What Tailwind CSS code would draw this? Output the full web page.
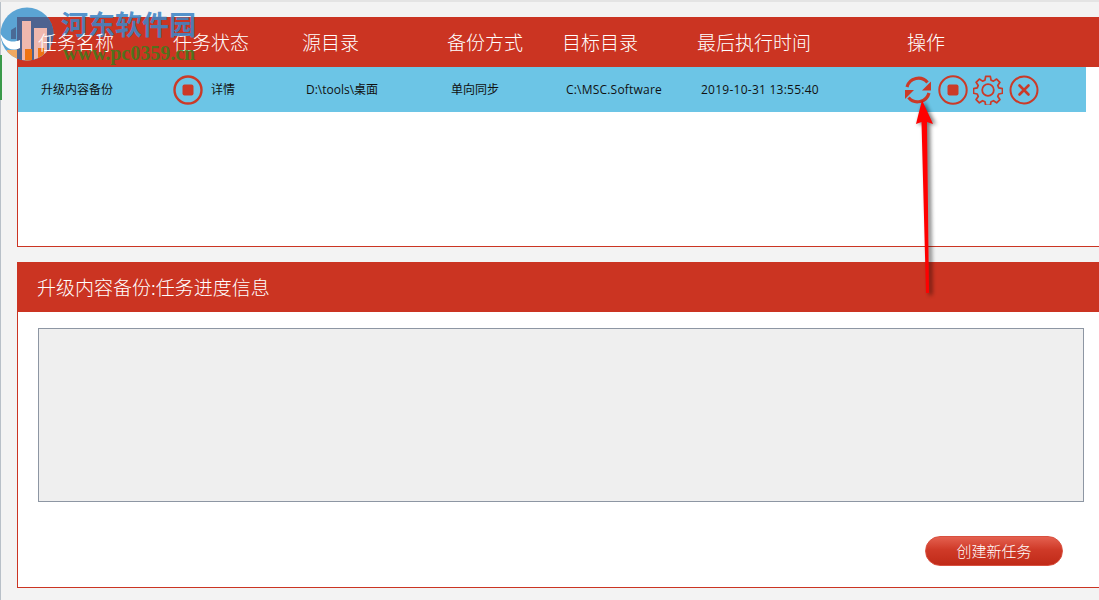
<!DOCTYPE html>
<html lang="zh">
<head>
    <meta charset="UTF-8">
    <title>任务列表</title>
    <script src="https://cdn.jsdelivr.net/npm/@tailwindcss/browser@4"></script>
</head>
<body class="relative w-[1099px] h-[600px] overflow-hidden bg-[#f3f3f3] font-['Noto_Sans_CJK_SC','Noto_Sans',sans-serif] text-black">
    <!-- bordure de fenetre -->
    <div class="h-[2px] bg-[#e4e4e4]"></div>
    <div class="absolute left-0 top-[2px] w-[1px] h-[598px] bg-[#b8c0c8]"></div>
    <div class="absolute left-0 top-[55px] w-[2px] h-[45px] bg-[#3a9a4a]"></div>

    <!-- filigrane du site : logo sous le texte de l'en-tete -->
    <svg class="absolute left-0 top-0 z-10" width="56" height="66" viewBox="0 0 56 66">
        <defs><clipPath id="rond"><circle cx="27" cy="34" r="26.500"/></clipPath></defs>
        <g clip-path="url(#rond)">
            <rect width="56" height="66" fill="#4a9bd0" opacity=".9"/>
            <rect x="17" y="17" width="39" height="49" fill="#4d6390"/>
            <path d="M22 21h9v42h-9zM34 28h13v34H34z" fill="#efb8ae"/>
            <path d="M25 49h7v14h-7zM38 48h6v14h-6z" fill="#ee7414"/>
            <path d="M7 50h10v10H7z" fill="#f0a860"/>
            <path d="M0 33c5 9 13 10 20 7v8C10 53 2 46 0 33z" fill="#fff"/>
            <path d="M11 30l5-3v12h-5z" fill="#4a6a96"/>
        </g>
    </svg>
    <div class="absolute left-[61px] top-[5px] z-10 text-[27px] leading-[38px] font-bold text-[#3f86c6]/90 whitespace-nowrap">河东软件园</div>
    <div class="absolute left-[63px] top-[43px] z-10 text-[20px] leading-[20px] font-bold text-[#3c7d1c]/85 font-['Liberation_Serif',serif] whitespace-nowrap">www.pc0359.cn</div>

    <div class="pl-[17px] pt-[15px]">
        <!-- liste des taches -->
        <section class="h-[230px] bg-white border-b border-l border-[#cb3422]">
            <div class="flex items-center h-[50px] -ml-px pl-[21px] bg-[#cb3422] text-white text-[19px] font-light">
                <div class="w-[135px] relative z-20">任务名称</div>
                <div class="w-[129px]">任务状态</div>
                <div class="w-[145px]">源目录</div>
                <div class="w-[115px]">备份方式</div>
                <div class="w-[135px]">目标目录</div>
                <div class="w-[210px]">最后执行时间</div>
                <div>操作</div>
            </div>
            <div class="flex items-center h-[45px] w-[1068px] pl-[23px] bg-[#6cc5e6] text-[12px] text-[#111] font-['Open_Sans','Noto_Sans_CJK_SC',sans-serif]">
                <div class="w-[132px]">升级内容备份</div>
                <div class="w-[133px] flex items-center gap-[8px]">
                    <svg width="30" height="30" viewBox="0 0 30 30"><circle cx="15" cy="15" r="13.500" fill="none" stroke="#cb3a28" stroke-width="2.400"/><rect x="9.500" y="9.500" width="11" height="11" rx="2" fill="#cb3a28"/></svg>
                    <span>详情</span>
                </div>
                <div class="w-[145px]">D:\tools\桌面</div>
                <div class="w-[115px]">单向同步</div>
                <div class="w-[135px] tracking-[0.2px]">C:\MSC.Software</div>
                <div class="w-[202px] tracking-[0.25px]">2019-10-31 13:55:40</div>
                <div class="flex items-center gap-[5px]">
                    <svg width="30" height="30" viewBox="0 0 30 30" fill="none">
                        <path d="M4 12A11.800 11.800 0 0 1 24.500 7.500" stroke="#cb3a28" stroke-width="3.200"/>
                        <path d="M28 6.500v9h-9z" fill="#cb3a28"/>
                        <path d="M26 18A11.800 11.800 0 0 1 5.500 22.500" stroke="#cb3a28" stroke-width="3.200"/>
                        <path d="M2 24v-9h9z" fill="#cb3a28"/>
                    </svg>
                    <svg width="30" height="30" viewBox="0 0 30 30"><circle cx="15" cy="15" r="13.700" fill="none" stroke="#cb3a28" stroke-width="2"/><rect x="9.500" y="9.500" width="11" height="11" rx="2" fill="#cb3a28"/></svg>
                    <svg width="30" height="30" viewBox="0 0 30 30" fill="none" stroke="#cb3a28" stroke-width="1.800" stroke-linejoin="round">
                        <circle cx="15" cy="15" r="5.800"/>
                        <path d="M12.600 1.500h4.800l.8 3.900 2.500 1 3.300-2.200 3.400 3.400-2.200 3.300 1 2.500 3.900.8v4.800l-3.900.8-1 2.500 2.200 3.300-3.400 3.400-3.300-2.200-2.500 1-.8 3.900h-4.800l-.8-3.900-2.500-1-3.300 2.200-3.400-3.400 2.200-3.300-1-2.500-3.900-.8v-4.800l3.900-.8 1-2.500-2.200-3.300 3.400-3.400 3.300 2.200 2.500-1z" transform="translate(.6 0) scale(.96)"/>
                    </svg>
                    <svg width="30" height="30" viewBox="0 0 30 30" fill="none" stroke="#cb3a28" class="ml-px"><circle cx="15" cy="15" r="13.500" stroke-width="2"/><path d="M10.500 10.500l9 9m0-9l-9 9" stroke-width="2.600" stroke-linecap="round"/></svg>
                </div>
            </div>
        </section>

        <!-- progression -->
        <section class="mt-[15px] h-[326px] bg-white border-b border-l border-[#cb3422] flex flex-col">
            <div class="flex items-center h-[50px] shrink-0 -ml-px pl-[20px] bg-[#cb3422] text-white text-[19px] font-light">升级内容备份:任务进度信息</div>
            <div class="mt-[16px] ml-[20px] w-[1046px] h-[174px] bg-[#efefef] border border-[#8d96a3]"></div>
            <div class="mt-[34px] ml-[907px] w-[138px] h-[30px] rounded-[15px] flex items-center justify-center text-white text-[15px] font-light border border-[#d9503f] bg-[linear-gradient(to_bottom,#e4604f_0%,#cf3a28_45%,#c02a18_100%)]">创建新任务</div>
        </section>
    </div>

    <!-- fleche rouge par-dessus la capture -->
    <svg class="absolute left-[905px] top-[95px]" width="40" height="210" viewBox="0 0 40 210">
        <defs><filter id="ombre" x="-50%" y="-10%" width="200%" height="120%"><feGaussianBlur stdDeviation="2"/></filter></defs>
        <path d="M17 5l-6 24 6-2 5 172h3l-2-172 6 2z" fill="#000" opacity=".55" filter="url(#ombre)" transform="translate(2 1)"/>
        <path d="M17 5l-6 24 5.500-2 4.500 171h3l-2-171 6 2z" fill="#ff0000"/>
    </svg>
</body>
</html>
